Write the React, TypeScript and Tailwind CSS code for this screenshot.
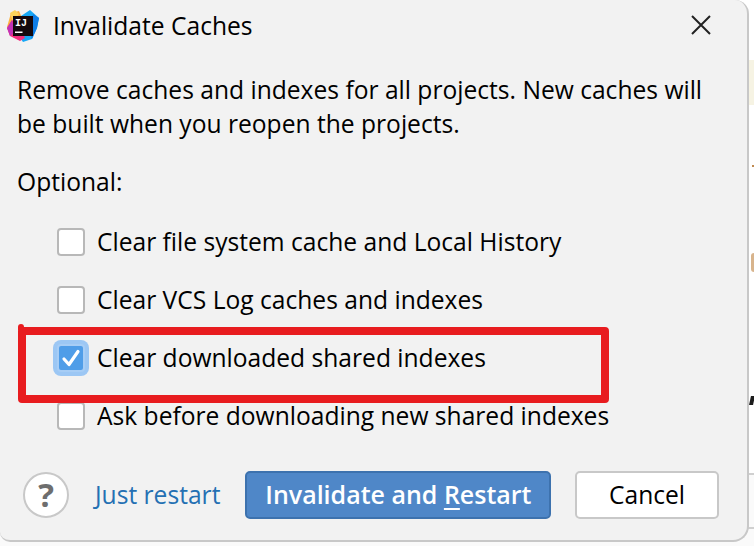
const font = "font-['Open_Sans','Noto_Sans',sans-serif]";

function JetBrainsIcon() {
  return (
    <svg width="32" height="32" viewBox="0 0 32 32" className="shrink-0">
      <polygon points="0,17 4,3 12,1 16,10 8,20" fill="#fdb23f" />
      <polygon points="3,3 8,0 12,4 6,12" fill="#fcd45c" />
      <polygon points="14,6 23,0 32,8 30,18 25,29 16,32 12,26" fill="#17a7f5" />
      <polygon points="26,4 32,8 30,18 25,29 22,20" fill="#0f7ee8" />
      <polygon points="0,18 5,10 12,16 18,28 13,31 3,26" fill="#f4307e" />
      <polygon points="0,18 5,10 8,22 3,26" fill="#c233b5" />
      <rect x="6" y="6" width="20" height="20" fill="#14090e" />
      <text x="8" y="16" fill="#fff" fontSize="10" fontWeight="700" fontFamily="'Liberation Mono', monospace">IJ</text>
      <rect x="8" y="21.5" width="7.5" height="1.5" fill="#fff" />
    </svg>
  );
}

function CheckRow({ label, checked = false }: { label: string; checked?: boolean }) {
  return (
    <div className="flex h-[58px] items-center gap-[12px] pl-[57px]">
      {checked ? (
        <span className="flex h-[28px] w-[28px] shrink-0 items-center justify-center rounded-[4px] border-2 border-[#a7cdf5] bg-[#4f9de8] shadow-[0_0_0_4px_#9cc7f4]">
          <svg width="20" height="20" viewBox="0 0 20 20" fill="none" className="shrink-0">
            <path d="M3 11 L8 16.5 L17 3.5" stroke="#fff" strokeWidth="3.2" strokeLinecap="round" strokeLinejoin="round" />
          </svg>
        </span>
      ) : (
        <span className="h-[28px] w-[28px] shrink-0 rounded-[4px] border-2 border-[#b8b8b8] bg-white" />
      )}
      <span className="whitespace-nowrap text-[24.6px] leading-[32px] text-black">{label}</span>
    </div>
  );
}

export default function App() {
  return (
    <div className={`${font} relative h-[546px] w-[754px] overflow-hidden bg-white`}>
      {/* bits of the window behind the dialog */}
      <div className="absolute left-[747px] top-[60px] h-[45px] w-[7px] bg-[#f6f3e3]" />
      <div className="absolute left-[752px] top-[165px] h-[2px] w-[2px] bg-[#c08a50]" />
      <div className="absolute left-[751px] top-[253px] h-[19px] w-[3px] rounded-l-full bg-[#d8b48c]" />
      <div className="absolute left-[750px] top-[396px] h-[9px] w-[4px] -skew-x-12 bg-[#1c1c1c]" />
      <div className="absolute left-0 top-[473px] h-[73px] w-[754px] border-t-2 border-[#d0d0d0] bg-[#fafafa]" />
      <div className="absolute left-0 top-[527px] h-[2px] w-[754px] bg-[#d0d0d0]" />

      <div className="relative flex h-[542px] w-[749px] flex-col rounded-tr-[14px] rounded-br-[16px] rounded-bl-[10px] border-r-2 border-b-2 border-[#c8c8c8] bg-[#f2f2f2]">
        <div className="flex h-[52px] items-center pl-[7px] pr-[36px]">
          <JetBrainsIcon />
          <span className="ml-[14px] text-[24.6px] text-black">Invalidate Caches</span>
          <svg width="20" height="20" viewBox="0 0 20 20" className="mb-[2px] ml-auto" fill="none">
            <path d="M1 1 L19 19 M19 1 L1 19" stroke="#222" strokeWidth="2" />
          </svg>
        </div>
        <p className="mt-[21px] px-[17px] text-[24.6px] leading-[34px] whitespace-nowrap text-black">
          Remove caches and indexes for all projects. New caches will
          <br />
          be built when you reopen the projects.
        </p>
        <p className="mt-[24px] px-[17px] text-[24.6px] leading-[34px] text-black">Optional:</p>
        <div className="mt-[14px] flex flex-col">
          <CheckRow label="Clear file system cache and Local History" />
          <CheckRow label="Clear VCS Log caches and indexes" />
          <CheckRow label="Clear downloaded shared indexes" checked />
          <CheckRow label="Ask before downloading new shared indexes" />
        </div>
        <div className="mt-auto mb-[21px] flex items-center pl-[23px] pr-[28px]">
          <span className="flex h-[46px] w-[46px] items-center justify-center rounded-full border-2 border-[#c8c8c8] bg-white text-[33px] font-bold text-[#6e6e6e]">
            ?
          </span>
          <span className="ml-[26px] text-[24.6px] text-[#2470b3]">Just restart</span>
          <button className="ml-[25px] h-[48px] w-[306px] rounded-[5px] border-2 border-[#3d72ae] bg-[#4f87c8] text-[25px] font-semibold text-white">
            Invalidate and <span className="underline underline-offset-4">R</span>estart
          </button>
          <button className="ml-auto h-[48px] w-[144px] rounded-[5px] border-2 border-[#c8c8c8] bg-white text-[24.6px] text-black">
            Cancel
          </button>
        </div>
      </div>
      <div className="absolute left-[18px] top-[327px] h-[76px] w-[591px] rounded-[4px] border-[8px] border-[#e81c1f]" />
      <div className="absolute left-[18px] top-[324px] h-[6px] w-[6px] rounded-t-full bg-[#e81c1f]" />
    </div>
  );
}
